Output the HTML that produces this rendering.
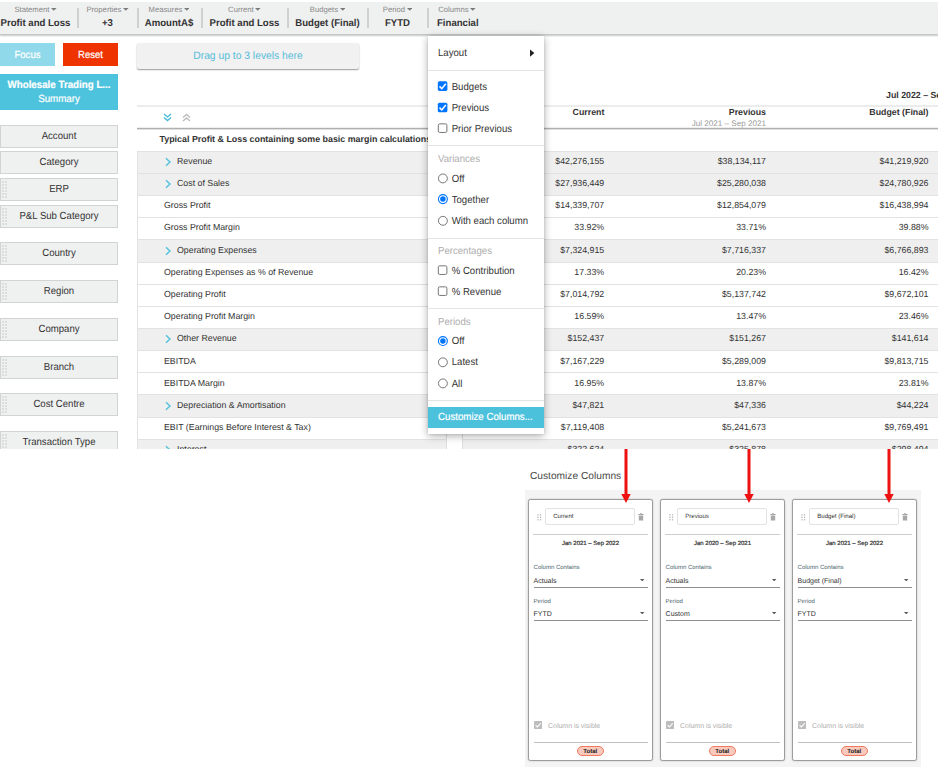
<!DOCTYPE html><html><head><meta charset="utf-8"><title>Customize Columns</title><style>
*{box-sizing:border-box;margin:0;padding:0}
html,body{width:938px;height:767px;overflow:hidden;background:#fff}
body{font-family:"Liberation Sans",Arial,sans-serif;color:#333;position:relative;text-rendering:geometricPrecision}
.abs{position:absolute}
.sy{display:inline-block;line-height:1;transform:scaleY(1.07);transform-origin:0 83%}
.sy4{display:inline-block;line-height:1;transform:scaleY(1.04);transform-origin:0 83%}
#app{position:absolute;left:0;top:0;width:938px;height:449px;overflow:hidden;background:#fff}
#topbar{position:absolute;left:0;top:2px;width:938px;height:33px;background:#eff0f0;border-bottom:1px solid #c6c8c8;box-shadow:0 1px 1.5px rgba(0,0,0,.22)}
.tb{position:absolute;top:0;height:32px;text-align:center;white-space:nowrap}
.tb .l{position:absolute;left:0;right:0;top:3.2px;font-size:7.7px;color:#888;line-height:9px}
.tb .v{position:absolute;left:0;right:0;top:16px;font-size:9.6px;font-weight:bold;color:#333;line-height:12px}
.tb .l svg{display:inline-block;margin-left:1.6px;vertical-align:1px}
.sep{position:absolute;top:6px;width:2px;height:19.5px;background:#cfd0d0}
.btn{position:absolute;color:#fff;text-align:center;font-size:9.6px;-webkit-text-stroke:0.2px}
.side{position:absolute;left:0;width:118px;height:23px;background:#eff0f0;border:1px solid #d2d3d3;font-size:9.6px;color:#333;text-align:center;line-height:21px}
.grip{position:absolute;left:1px;top:2px;width:5px;height:17px;background-color:#dcdddd;background-image:linear-gradient(to right,transparent 2px,#eff0f0 2px),linear-gradient(to bottom,transparent 2px,#eff0f0 2px);background-size:3px 3px}
.row{position:absolute;left:137px;width:801px;border-top:1px solid #e2e2e2}
.row.g{background:#efefef}
.cell{position:absolute;font-size:8.8px;color:#333;white-space:nowrap;line-height:12px}
.num{text-align:right;width:120px}
.chev{position:absolute}
#menu{position:absolute;left:428px;top:36px;width:116px;height:398px;background:#fff;box-shadow:0 2px 8px rgba(0,0,0,.32),0 0 2px rgba(0,0,0,.12)}
.mi{transform:scaleY(1.07);transform-origin:0 78%;position:absolute;left:10px;font-size:9.62px;color:#333;white-space:nowrap;line-height:12px}
.mh{transform:scaleY(1.07);transform-origin:0 78%;position:absolute;left:10px;font-size:9.62px;color:#adadad;white-space:nowrap;line-height:12px}
.md{position:absolute;left:0;right:0;height:1px;background:#e4e4e4}
#cc{position:absolute;left:524px;top:455px;width:414px;height:312px}
.card{position:absolute;top:499px;width:125px;height:261.5px;background:#fff;border:1px solid #9c9c9c;border-radius:2.5px;box-shadow:0 0 1.5px rgba(0,0,0,.3)}
.card .t{position:absolute;font-size:6.1px;color:#333;white-space:nowrap;line-height:8px}
.card .lab{position:absolute;left:4.6px;font-size:6px;color:#4a626c;white-space:nowrap;line-height:8px}
.card .val{position:absolute;left:4.6px;font-size:7px;color:#333;white-space:nowrap;line-height:9px}
.card .ul{position:absolute;left:4.5px;right:4px;height:1px;background:#8f8f8f}
.card .hl{position:absolute;left:4px;right:4px;height:1px;background:#cecece}
</style></head><body>
<div id="app">
<div id="topbar">
<div class="tb" style="left:-2px;width:75px;"><div class="l">Statement<svg width="5.6" height="2.8" viewBox="0 0 5.6 2.8"><path d="M0 0 H5.6 L2.8 2.8 Z" fill="#7a7a7a"/></svg></div><div class="v"><span class="sy4">Profit and Loss</span></div></div>
<div class="tb" style="left:79px;width:57px;"><div class="l">Properties<svg width="5.6" height="2.8" viewBox="0 0 5.6 2.8"><path d="M0 0 H5.6 L2.8 2.8 Z" fill="#7a7a7a"/></svg></div><div class="v"><span class="sy4">+3</span></div></div>
<div class="tb" style="left:138px;width:62px;"><div class="l">Measures<svg width="5.6" height="2.8" viewBox="0 0 5.6 2.8"><path d="M0 0 H5.6 L2.8 2.8 Z" fill="#7a7a7a"/></svg></div><div class="v"><span class="sy4">AmountA$</span></div></div>
<div class="tb" style="left:202px;width:85px;"><div class="l">Current<svg width="5.6" height="2.8" viewBox="0 0 5.6 2.8"><path d="M0 0 H5.6 L2.8 2.8 Z" fill="#7a7a7a"/></svg></div><div class="v"><span class="sy4">Profit and Loss</span></div></div>
<div class="tb" style="left:288px;width:79px;"><div class="l">Budgets<svg width="5.6" height="2.8" viewBox="0 0 5.6 2.8"><path d="M0 0 H5.6 L2.8 2.8 Z" fill="#7a7a7a"/></svg></div><div class="v"><span class="sy4">Budget (Final)</span></div></div>
<div class="tb" style="left:368px;width:59px;"><div class="l">Period<svg width="5.6" height="2.8" viewBox="0 0 5.6 2.8"><path d="M0 0 H5.6 L2.8 2.8 Z" fill="#7a7a7a"/></svg></div><div class="v"><span class="sy4">FYTD</span></div></div>
<div class="tb" style="left:437px;width:80px;text-align:left;"><div class="l" style="padding-left:1.2px">Columns<svg width="5.6" height="2.8" viewBox="0 0 5.6 2.8"><path d="M0 0 H5.6 L2.8 2.8 Z" fill="#7a7a7a"/></svg></div><div class="v"><span class="sy4">Financial</span></div></div>
<div class="sep" style="left:77px"></div>
<div class="sep" style="left:137px"></div>
<div class="sep" style="left:201px"></div>
<div class="sep" style="left:287px"></div>
<div class="sep" style="left:367px"></div>
<div class="sep" style="left:427px"></div>
</div>
<div class="btn" style="left:0;top:43px;width:55px;height:23px;background:#8fd9ea;line-height:25.4px"><span class="sy">Focus</span></div>
<div class="btn" style="left:63px;top:43px;width:55px;height:23px;background:#ee3300;line-height:25.4px"><span class="sy">Reset</span></div>
<div class="btn" style="left:0;top:74px;width:118px;height:36px;background:#4dc3de;line-height:14.4px;padding-top:4.9px;font-size:9.75px"><b class="sy">Wholesale Trading L...</b><br><span class="sy">Summary</span></div>
<div class="side" style="top:125px"><span class="sy">Account</span></div>
<div class="side" style="top:151px"><span class="sy">Category</span></div>
<div class="side" style="top:178px"><div class="grip"></div><span class="sy">ERP</span></div>
<div class="side" style="top:205px"><div class="grip"></div><span class="sy">P&amp;L Sub Category</span></div>
<div class="side" style="top:242.4px"><div class="grip"></div><span class="sy">Country</span></div>
<div class="side" style="top:280.2px"><div class="grip"></div><span class="sy">Region</span></div>
<div class="side" style="top:318px"><div class="grip"></div><span class="sy">Company</span></div>
<div class="side" style="top:355.8px"><div class="grip"></div><span class="sy">Branch</span></div>
<div class="side" style="top:393px"><div class="grip"></div><span class="sy">Cost Centre</span></div>
<div class="side" style="top:431.4px"><div class="grip"></div><span class="sy">Transaction Type</span></div>
<div class="abs" style="left:137px;top:43px;width:222px;height:26px;background:#f1f1f1;border-radius:2px;box-shadow:0 1px 1.5px rgba(0,0,0,.4);font-size:10.32px;color:#58bcd8;text-align:center;line-height:27.4px"><span class="sy4">Drag up to 3 levels here</span></div>
<div class="abs" style="left:137px;top:105px;width:801px;height:2px;background:#ececec"></div>
<div class="abs" style="left:137px;top:128px;width:801px;height:1px;background:#b0b0b0"></div>
<div class="abs" style="left:137px;top:129px;width:801px;height:1px;background:#e0e0e0"></div>
<div class="abs" style="left:137px;top:127px;width:801px;height:1px;background:#eeeeee"></div>
<svg class="abs" style="left:163px;top:113px" width="9" height="9" viewBox="0 0 9 9"><path d="M1 1 L4.5 4 L8 1 M1 4.6 L4.5 7.6 L8 4.6" fill="none" stroke="#3fbbd8" stroke-width="1.3"/></svg>
<svg class="abs" style="left:182px;top:113px" width="9" height="9" viewBox="0 0 9 9"><path d="M1 4.4 L4.5 1.4 L8 4.4 M1 8 L4.5 5 L8 8" fill="none" stroke="#bcbcbc" stroke-width="1.35"/></svg>
<div class="cell" style="left:886px;top:89px;width:200px;font-weight:bold;text-align:left">Jul 2022 – Sep 2022</div>
<div class="cell num" style="left:484.4px;top:106px;font-weight:bold">Current</div>
<div class="cell num" style="left:646px;top:106px;font-weight:bold">Previous</div>
<div class="cell num" style="left:646px;top:118.6px;font-size:8.1px;color:#9a9a9a;line-height:10px">Jul 2021 – Sep 2021</div>
<div class="cell num" style="left:808.5px;top:106px;font-weight:bold">Budget (Final)</div>
<div class="cell" style="left:159.5px;top:132.5px;font-weight:bold;font-size:8.9px">Typical Profit &amp; Loss containing some basic margin calculations</div>
<div class="row g" style="top:150.80px;height:22.35px">
<svg class="chev" style="left:28px;top:5.4px" width="6.5" height="10" viewBox="0 0 6.5 10"><path d="M1 1.2 L5 5 L1 8.8" fill="none" stroke="#52c1dc" stroke-width="1.45"/></svg>
<div class="cell" style="left:40px;top:2.9px">Revenue</div>
<div class="cell num" style="left:347.2px;top:2.9px">$42,276,155</div>
<div class="cell num" style="left:509px;top:2.9px">$38,134,117</div>
<div class="cell num" style="left:671.5px;top:2.9px">$41,219,920</div>
</div>
<div class="row g" style="top:172.95px;height:22.35px">
<svg class="chev" style="left:28px;top:5.4px" width="6.5" height="10" viewBox="0 0 6.5 10"><path d="M1 1.2 L5 5 L1 8.8" fill="none" stroke="#52c1dc" stroke-width="1.45"/></svg>
<div class="cell" style="left:40px;top:2.965px">Cost of Sales</div>
<div class="cell num" style="left:347.2px;top:2.965px">$27,936,449</div>
<div class="cell num" style="left:509px;top:2.965px">$25,280,038</div>
<div class="cell num" style="left:671.5px;top:2.965px">$24,780,926</div>
</div>
<div class="row" style="top:195.10px;height:22.35px">
<div class="cell" style="left:27px;top:3.03px">Gross Profit</div>
<div class="cell num" style="left:347.2px;top:3.03px">$14,339,707</div>
<div class="cell num" style="left:509px;top:3.03px">$12,854,079</div>
<div class="cell num" style="left:671.5px;top:3.03px">$16,438,994</div>
</div>
<div class="row" style="top:217.25px;height:22.35px">
<div class="cell" style="left:27px;top:3.0949999999999998px">Gross Profit Margin</div>
<div class="cell num" style="left:347.2px;top:3.0949999999999998px">33.92%</div>
<div class="cell num" style="left:509px;top:3.0949999999999998px">33.71%</div>
<div class="cell num" style="left:671.5px;top:3.0949999999999998px">39.88%</div>
</div>
<div class="row g" style="top:239.40px;height:22.35px">
<svg class="chev" style="left:28px;top:5.4px" width="6.5" height="10" viewBox="0 0 6.5 10"><path d="M1 1.2 L5 5 L1 8.8" fill="none" stroke="#52c1dc" stroke-width="1.45"/></svg>
<div class="cell" style="left:40px;top:3.16px">Operating Expenses</div>
<div class="cell num" style="left:347.2px;top:3.16px">$7,324,915</div>
<div class="cell num" style="left:509px;top:3.16px">$7,716,337</div>
<div class="cell num" style="left:671.5px;top:3.16px">$6,766,893</div>
</div>
<div class="row" style="top:261.55px;height:22.35px">
<div class="cell" style="left:27px;top:3.225px">Operating Expenses as % of Revenue</div>
<div class="cell num" style="left:347.2px;top:3.225px">17.33%</div>
<div class="cell num" style="left:509px;top:3.225px">20.23%</div>
<div class="cell num" style="left:671.5px;top:3.225px">16.42%</div>
</div>
<div class="row" style="top:283.70px;height:22.35px">
<div class="cell" style="left:27px;top:3.29px">Operating Profit</div>
<div class="cell num" style="left:347.2px;top:3.29px">$7,014,792</div>
<div class="cell num" style="left:509px;top:3.29px">$5,137,742</div>
<div class="cell num" style="left:671.5px;top:3.29px">$9,672,101</div>
</div>
<div class="row" style="top:305.85px;height:22.35px">
<div class="cell" style="left:27px;top:3.355px">Operating Profit Margin</div>
<div class="cell num" style="left:347.2px;top:3.355px">16.59%</div>
<div class="cell num" style="left:509px;top:3.355px">13.47%</div>
<div class="cell num" style="left:671.5px;top:3.355px">23.46%</div>
</div>
<div class="row g" style="top:328.00px;height:22.35px">
<svg class="chev" style="left:28px;top:5.4px" width="6.5" height="10" viewBox="0 0 6.5 10"><path d="M1 1.2 L5 5 L1 8.8" fill="none" stroke="#52c1dc" stroke-width="1.45"/></svg>
<div class="cell" style="left:40px;top:3.42px">Other Revenue</div>
<div class="cell num" style="left:347.2px;top:3.42px">$152,437</div>
<div class="cell num" style="left:509px;top:3.42px">$151,267</div>
<div class="cell num" style="left:671.5px;top:3.42px">$141,614</div>
</div>
<div class="row" style="top:350.15px;height:22.35px">
<div class="cell" style="left:27px;top:3.485px">EBITDA</div>
<div class="cell num" style="left:347.2px;top:3.485px">$7,167,229</div>
<div class="cell num" style="left:509px;top:3.485px">$5,289,009</div>
<div class="cell num" style="left:671.5px;top:3.485px">$9,813,715</div>
</div>
<div class="row" style="top:372.30px;height:22.35px">
<div class="cell" style="left:27px;top:3.55px">EBITDA Margin</div>
<div class="cell num" style="left:347.2px;top:3.55px">16.95%</div>
<div class="cell num" style="left:509px;top:3.55px">13.87%</div>
<div class="cell num" style="left:671.5px;top:3.55px">23.81%</div>
</div>
<div class="row g" style="top:394.45px;height:22.35px">
<svg class="chev" style="left:28px;top:5.4px" width="6.5" height="10" viewBox="0 0 6.5 10"><path d="M1 1.2 L5 5 L1 8.8" fill="none" stroke="#52c1dc" stroke-width="1.45"/></svg>
<div class="cell" style="left:40px;top:3.615px">Depreciation &amp; Amortisation</div>
<div class="cell num" style="left:347.2px;top:3.615px">$47,821</div>
<div class="cell num" style="left:509px;top:3.615px">$47,336</div>
<div class="cell num" style="left:671.5px;top:3.615px">$44,224</div>
</div>
<div class="row" style="top:416.60px;height:22.35px">
<div class="cell" style="left:27px;top:3.6799999999999997px">EBIT (Earnings Before Interest &amp; Tax)</div>
<div class="cell num" style="left:347.2px;top:3.6799999999999997px">$7,119,408</div>
<div class="cell num" style="left:509px;top:3.6799999999999997px">$5,241,673</div>
<div class="cell num" style="left:671.5px;top:3.6799999999999997px">$9,769,491</div>
</div>
<div class="row g" style="top:438.75px;height:22.35px">
<svg class="chev" style="left:28px;top:5.4px" width="6.5" height="10" viewBox="0 0 6.5 10"><path d="M1 1.2 L5 5 L1 8.8" fill="none" stroke="#52c1dc" stroke-width="1.45"/></svg>
<div class="cell" style="left:40px;top:3.745px">Interest</div>
<div class="cell num" style="left:347.2px;top:3.745px">$322,624</div>
<div class="cell num" style="left:509px;top:3.745px">$325,878</div>
<div class="cell num" style="left:671.5px;top:3.745px">$298,494</div>
</div>
<div class="abs" style="left:137px;top:151px;width:1px;height:300px;background:#e2e2e2"></div>
<div class="abs" style="left:446px;top:151px;width:17px;height:300px;background:#fff;border-left:1px solid #dedede;border-right:1px solid #dedede"></div>
<div id="menu">
<div class="mi" style="top:11.90px">Layout</div>
<div class="md" style="top:34px"></div>
<div class="mi" style="top:45.50px;left:23.7px">Budgets</div>
<div class="mi" style="top:66.80px;left:23.7px">Previous</div>
<div class="mi" style="top:87.70px;left:23.7px">Prior Previous</div>
<div class="md" style="top:109px"></div>
<div class="mh" style="top:117.80px">Variances</div>
<div class="mi" style="top:137.50px;left:23.7px">Off</div>
<div class="mi" style="top:158.70px;left:23.7px">Together</div>
<div class="mi" style="top:179.55px;left:23.7px">With each column</div>
<div class="md" style="top:202.2px"></div>
<div class="mh" style="top:210.30px">Percentages</div>
<div class="mi" style="top:229.85px;left:23.7px">% Contribution</div>
<div class="mi" style="top:251.00px;left:23.7px">% Revenue</div>
<div class="md" style="top:272px"></div>
<div class="mh" style="top:280.65px">Periods</div>
<div class="mi" style="top:300.40px;left:23.7px">Off</div>
<div class="mi" style="top:321.40px;left:23.7px">Latest</div>
<div class="mi" style="top:342.70px;left:23.7px">All</div>
<div class="md" style="top:364px"></div>
<div class="abs" style="left:0;top:371px;width:116px;height:21px;background:#4bc1dc"></div>
<div class="mi" style="top:375.60px;left:10px;color:#fff;font-size:9.7px;-webkit-text-stroke:0.2px">Customize Columns...</div>
<svg class="abs" style="left:0;top:0" width="117" height="398" viewBox="0 0 117 398"><path d="M102 13.5 L106.39999999999998 17.1 L102 20.700000000000003 Z" fill="#222"/><rect x="9.80" y="45.35" width="9.6" height="9.6" rx="1.6" fill="#0075ff"/><path d="M11.50 50.35 L13.80 52.65 L17.80 47.65" fill="none" stroke="#fff" stroke-width="1.55"/><rect x="9.80" y="66.65" width="9.6" height="9.6" rx="1.6" fill="#0075ff"/><path d="M11.50 71.65 L13.80 73.95 L17.80 68.95" fill="none" stroke="#fff" stroke-width="1.55"/><rect x="10.30" y="87.85" width="8.6" height="8.6" rx="1.4" fill="#fff" stroke="#767676" stroke-width="1"/><circle cx="14.90" cy="142.45" r="4.45" fill="#fff" stroke="#767676" stroke-width="1"/><circle cx="14.90" cy="163.10" r="4.45" fill="#fff" stroke="#0075ff" stroke-width="1.15"/><circle cx="14.90" cy="163.10" r="2.75" fill="#0075ff"/><circle cx="14.90" cy="184.80" r="4.45" fill="#fff" stroke="#767676" stroke-width="1"/><rect x="10.30" y="229.85" width="8.6" height="8.6" rx="1.4" fill="#fff" stroke="#767676" stroke-width="1"/><rect x="10.30" y="250.85" width="8.6" height="8.6" rx="1.4" fill="#fff" stroke="#767676" stroke-width="1"/><circle cx="14.90" cy="305.05" r="4.45" fill="#fff" stroke="#0075ff" stroke-width="1.15"/><circle cx="14.90" cy="305.05" r="2.75" fill="#0075ff"/><circle cx="14.90" cy="326.30" r="4.45" fill="#fff" stroke="#767676" stroke-width="1"/><circle cx="14.90" cy="347.40" r="4.45" fill="#fff" stroke="#767676" stroke-width="1"/></svg>
</div>
</div>
<div class="abs" style="left:530px;top:470.2px;font-size:10.2px;color:#4a4a4a;line-height:13px">Customize Columns</div>
<div class="abs" style="left:525px;top:490px;width:396px;height:277px;background:#f4f4f4"></div>
<div class="card" style="left:528px">
<svg class="abs" style="left:8px;top:14px" width="5" height="7" viewBox="0 0 5 7"><g fill="#b6b6b6"><rect x="0.3" y="0.3" width="1.3" height="1.3"/><rect x="2.9" y="0.3" width="1.3" height="1.3"/><rect x="0.3" y="2.7" width="1.3" height="1.3"/><rect x="2.9" y="2.7" width="1.3" height="1.3"/><rect x="0.3" y="5.1" width="1.3" height="1.3"/><rect x="2.9" y="5.1" width="1.3" height="1.3"/></g></svg>
<div class="abs" style="left:16px;top:7.5px;width:90px;height:17.5px;border:1px solid #e2e2e2;border-radius:2px;background:#fff"></div>
<div class="t" style="left:24.2px;top:13.2px">Current</div>
<svg class="abs" style="left:109px;top:13px" width="6" height="8" viewBox="0 0 6 8"><path d="M0.3 1 H5.7 V1.9 H0.3 Z M2 0.2 H4 V1 H2 Z M0.8 2.4 H5.2 V7.4 H0.8 Z" fill="#a8a8a8"/></svg>
<div class="hl" style="top:34px"></div>
<div class="t" style="left:0;right:0;text-align:center;top:39.5px;font-size:6px;color:#333;-webkit-text-stroke:0.2px">Jan 2021 – Sep 2022</div>
<div class="lab" style="top:64.4px">Column Contains</div>
<div class="val" style="top:76.7px">Actuals</div>
<svg class="abs" style="right:7.5px;top:79.2px" width="4.4" height="2.3" viewBox="0 0 4.4 2.3"><path d="M0 0 H4.4 L2.2 2.3 Z" fill="#555"/></svg>
<div class="ul" style="top:87px"></div>
<div class="lab" style="top:98.1px">Period</div>
<div class="val" style="top:109.9px">FYTD</div>
<svg class="abs" style="right:7.5px;top:112px" width="4.4" height="2.3" viewBox="0 0 4.4 2.3"><path d="M0 0 H4.4 L2.2 2.3 Z" fill="#555"/></svg>
<div class="ul" style="top:120px"></div>
<svg class="abs" style="left:5.1px;top:220.9px" width="8.2" height="8.2" viewBox="0 0 8.2 8.2"><rect width="8.2" height="8.2" rx="1" fill="#bdbdbd"/><path d="M1.6 4.2 L3.4 6 L6.7 2.3" fill="none" stroke="#fff" stroke-width="1.1"/></svg>
<div class="t" style="left:19.1px;top:223.1px;font-size:6.95px;color:#adadad">Column is visible</div>
<div class="ul" style="top:241.5px;background:#c0c0c0"></div>
<div class="abs" style="left:47.5px;top:246px;width:27.5px;height:10px;border:1px solid #f07a5e;border-radius:5px;background:#f9c9bd;font-size:6px;font-weight:bold;color:#1a1a1a;text-align:center;line-height:10.2px">Total</div>
</div>
<div class="card" style="left:660px">
<svg class="abs" style="left:8px;top:14px" width="5" height="7" viewBox="0 0 5 7"><g fill="#b6b6b6"><rect x="0.3" y="0.3" width="1.3" height="1.3"/><rect x="2.9" y="0.3" width="1.3" height="1.3"/><rect x="0.3" y="2.7" width="1.3" height="1.3"/><rect x="2.9" y="2.7" width="1.3" height="1.3"/><rect x="0.3" y="5.1" width="1.3" height="1.3"/><rect x="2.9" y="5.1" width="1.3" height="1.3"/></g></svg>
<div class="abs" style="left:16px;top:7.5px;width:90px;height:17.5px;border:1px solid #e2e2e2;border-radius:2px;background:#fff"></div>
<div class="t" style="left:24.2px;top:13.2px">Previous</div>
<svg class="abs" style="left:109px;top:13px" width="6" height="8" viewBox="0 0 6 8"><path d="M0.3 1 H5.7 V1.9 H0.3 Z M2 0.2 H4 V1 H2 Z M0.8 2.4 H5.2 V7.4 H0.8 Z" fill="#a8a8a8"/></svg>
<div class="hl" style="top:34px"></div>
<div class="t" style="left:0;right:0;text-align:center;top:39.5px;font-size:6px;color:#333;-webkit-text-stroke:0.2px">Jan 2020 – Sep 2021</div>
<div class="lab" style="top:64.4px">Column Contains</div>
<div class="val" style="top:76.7px">Actuals</div>
<svg class="abs" style="right:7.5px;top:79.2px" width="4.4" height="2.3" viewBox="0 0 4.4 2.3"><path d="M0 0 H4.4 L2.2 2.3 Z" fill="#555"/></svg>
<div class="ul" style="top:87px"></div>
<div class="lab" style="top:98.1px">Period</div>
<div class="val" style="top:109.9px">Custom</div>
<svg class="abs" style="right:7.5px;top:112px" width="4.4" height="2.3" viewBox="0 0 4.4 2.3"><path d="M0 0 H4.4 L2.2 2.3 Z" fill="#555"/></svg>
<div class="ul" style="top:120px"></div>
<svg class="abs" style="left:5.1px;top:220.9px" width="8.2" height="8.2" viewBox="0 0 8.2 8.2"><rect width="8.2" height="8.2" rx="1" fill="#bdbdbd"/><path d="M1.6 4.2 L3.4 6 L6.7 2.3" fill="none" stroke="#fff" stroke-width="1.1"/></svg>
<div class="t" style="left:19.1px;top:223.1px;font-size:6.95px;color:#adadad">Column is visible</div>
<div class="ul" style="top:241.5px;background:#c0c0c0"></div>
<div class="abs" style="left:47.5px;top:246px;width:27.5px;height:10px;border:1px solid #f07a5e;border-radius:5px;background:#f9c9bd;font-size:6px;font-weight:bold;color:#1a1a1a;text-align:center;line-height:10.2px">Total</div>
</div>
<div class="card" style="left:792px">
<svg class="abs" style="left:8px;top:14px" width="5" height="7" viewBox="0 0 5 7"><g fill="#b6b6b6"><rect x="0.3" y="0.3" width="1.3" height="1.3"/><rect x="2.9" y="0.3" width="1.3" height="1.3"/><rect x="0.3" y="2.7" width="1.3" height="1.3"/><rect x="2.9" y="2.7" width="1.3" height="1.3"/><rect x="0.3" y="5.1" width="1.3" height="1.3"/><rect x="2.9" y="5.1" width="1.3" height="1.3"/></g></svg>
<div class="abs" style="left:16px;top:7.5px;width:90px;height:17.5px;border:1px solid #e2e2e2;border-radius:2px;background:#fff"></div>
<div class="t" style="left:24.2px;top:13.2px">Budget (Final)</div>
<svg class="abs" style="left:109px;top:13px" width="6" height="8" viewBox="0 0 6 8"><path d="M0.3 1 H5.7 V1.9 H0.3 Z M2 0.2 H4 V1 H2 Z M0.8 2.4 H5.2 V7.4 H0.8 Z" fill="#a8a8a8"/></svg>
<div class="hl" style="top:34px"></div>
<div class="t" style="left:0;right:0;text-align:center;top:39.5px;font-size:6px;color:#333;-webkit-text-stroke:0.2px">Jan 2021 – Sep 2022</div>
<div class="lab" style="top:64.4px">Column Contains</div>
<div class="val" style="top:76.7px">Budget (Final)</div>
<svg class="abs" style="right:7.5px;top:79.2px" width="4.4" height="2.3" viewBox="0 0 4.4 2.3"><path d="M0 0 H4.4 L2.2 2.3 Z" fill="#555"/></svg>
<div class="ul" style="top:87px"></div>
<div class="lab" style="top:98.1px">Period</div>
<div class="val" style="top:109.9px">FYTD</div>
<svg class="abs" style="right:7.5px;top:112px" width="4.4" height="2.3" viewBox="0 0 4.4 2.3"><path d="M0 0 H4.4 L2.2 2.3 Z" fill="#555"/></svg>
<div class="ul" style="top:120px"></div>
<svg class="abs" style="left:5.1px;top:220.9px" width="8.2" height="8.2" viewBox="0 0 8.2 8.2"><rect width="8.2" height="8.2" rx="1" fill="#bdbdbd"/><path d="M1.6 4.2 L3.4 6 L6.7 2.3" fill="none" stroke="#fff" stroke-width="1.1"/></svg>
<div class="t" style="left:19.1px;top:223.1px;font-size:6.95px;color:#adadad">Column is visible</div>
<div class="ul" style="top:241.5px;background:#c0c0c0"></div>
<div class="abs" style="left:47.5px;top:246px;width:27.5px;height:10px;border:1px solid #f07a5e;border-radius:5px;background:#f9c9bd;font-size:6px;font-weight:bold;color:#1a1a1a;text-align:center;line-height:10.2px">Total</div>
</div>
<svg class="abs" style="left:620.8px;top:449px" width="10" height="55" viewBox="0 0 10 55"><path d="M3.5 0 H6.5 V45 H9.7 L5 54 L0.3 45 H3.5 Z" fill="#ee1111"/></svg>
<svg class="abs" style="left:744.4px;top:449px" width="10" height="55" viewBox="0 0 10 55"><path d="M3.5 0 H6.5 V45 H9.7 L5 54 L0.3 45 H3.5 Z" fill="#ee1111"/></svg>
<svg class="abs" style="left:883.9px;top:449px" width="10" height="55" viewBox="0 0 10 55"><path d="M3.5 0 H6.5 V45 H9.7 L5 54 L0.3 45 H3.5 Z" fill="#ee1111"/></svg>
</body></html>
